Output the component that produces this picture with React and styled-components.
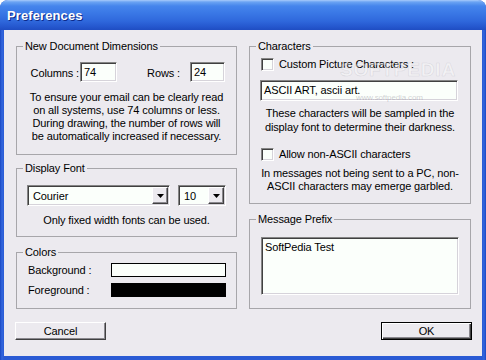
import React from "react";
import styled, { createGlobalStyle } from "styled-components";

const GlobalStyle = createGlobalStyle`
  html, body { margin: 0; padding: 0; background: #ffffff; }
  body {
    font-family: "Liberation Sans", Arial, sans-serif;
    font-size: 11px;
    letter-spacing: -0.12px;
    color: #000;
  }
  #root { width: 486px; height: 360px; }
`;

const Window = styled.div`
  position: relative;
  width: 486px;
  height: 360px;
  box-sizing: border-box;
  display: flex;
  flex-direction: column;
  background: linear-gradient(to right, #1a47c2 0, #3366dd 2px, #2a5ad4 4px, #2a5ad4 482px, #3366dd 484px, #1a47c2 486px);
  border-radius: 8px 8px 0 0;
  overflow: hidden;
`;

const TitleBar = styled.div`
  flex: none;
  height: 30px;
  box-sizing: border-box;
  display: flex;
  align-items: center;
  padding: 1px 0 0 7px;
  background: linear-gradient(
    to bottom,
    #a8cbfb 0px,
    #6aa3f3 2px,
    #4585ec 6px,
    #3a78e6 13px,
    #2f68dc 21px,
    #2659d0 26px,
    #1f4dc2 30px
  );
  color: #fff;
  font-weight: bold;
  font-size: 13px;
  letter-spacing: 0.1px;
  text-shadow: 1px 1px 0 #0c2a8a;
`;

const ClientArea = styled.div`
  flex: 1;
  margin: 0 4px 4px;
  background: #eceaef;
  display: flex;
  flex-direction: column;
  padding-top: 9px;
`;

const Columns = styled.div`
  display: grid;
  grid-template-columns: 221px 222px;
  column-gap: 12px;
  padding: 0 11px 0 12px;
  align-items: start;
`;

const Column = styled.div`
  display: flex;
  flex-direction: column;
`;

const Group = styled.fieldset`
  margin: ${(p) => p.$mt || 0}px 0 0;
  padding: 0;
  height: ${(p) => p.$h}px;
  box-sizing: border-box;
  min-width: 0;
  border: 1px solid #a7a6aa;
  border-radius: 0;
`;

const Legend = styled.legend`
  margin-left: 6px;
  padding: 0 2px;
  line-height: 14px;
  font-size: 11px;
`;

const GroupBody = styled.div`
  display: flex;
  flex-direction: column;
  align-items: ${(p) => p.$align || "stretch"};
  padding: ${(p) => p.$pt}px 0 0 ${(p) => p.$pl || 0}px;
`;

const DimRow = styled.div`
  display: grid;
  grid-template-columns: 63px 37px 73px 35px;
  align-items: center;
  height: 20px;
`;

const FieldLabel = styled.span`
  justify-self: end;
  padding-right: ${(p) => p.$pr || 0}px;
  padding-top: 2px;
`;

const sunken = `
  border: 1px solid;
  border-color: #858585 #ffffff #ffffff #858585;
  box-shadow: inset 1px 1px 0 #404040, inset -1px -1px 0 #d6d3da;
`;

const raised = `
  border: 1px solid;
  border-color: #ffffff #404040 #404040 #ffffff;
  box-shadow: inset -1px -1px 0 #8a888e;
  background: #eceaef;
`;

const TextBox = styled.div`
  box-sizing: border-box;
  width: ${(p) => p.$w}px;
  height: ${(p) => p.$h || 20}px;
  margin: ${(p) => p.$m || "0"};
  background: #fbfffb;
  ${sunken}
  padding: 2px 0 0 3px;
  line-height: 15px;
  white-space: nowrap;
  overflow: hidden;
`;

const Note = styled.p`
  margin: ${(p) => p.$mt || 0}px 0 0;
  text-align: center;
  line-height: ${(p) => p.$lh || 13}px;
`;

const SelectRow = styled.div`
  display: flex;
  gap: 8px;
  height: 21px;
`;

const Select = styled.div`
  box-sizing: border-box;
  width: ${(p) => p.$w}px;
  height: 21px;
  display: flex;
  align-items: stretch;
  background: #fbfffb;
  ${sunken}
  padding: 1px;
`;

const SelectValue = styled.span`
  flex: 1;
  padding: 2px 0 0 4px;
  line-height: 14px;
`;

const DropButton = styled.span`
  flex: none;
  width: 16px;
  box-sizing: border-box;
  ${raised}
  display: flex;
  align-items: center;
  justify-content: center;
`;

const ColorRow = styled.div`
  display: grid;
  grid-template-columns: 83px 115px;
  align-items: center;
  height: 14px;
  margin-top: ${(p) => p.$mt || 0}px;
`;

const Swatch = styled.div`
  height: 14px;
  box-sizing: border-box;
  border: 1px solid #000;
  background: ${(p) => p.$color};
`;

const CheckRow = styled.label`
  display: flex;
  align-items: center;
  height: 13px;
  margin-top: ${(p) => p.$mt || 0}px;
`;

const CheckBox = styled.span`
  flex: none;
  width: 13px;
  height: 13px;
  box-sizing: border-box;
  background: #fbfffb;
  ${sunken}
`;

const CheckText = styled.span`
  margin-left: 5px;
  line-height: 13px;
`;

const TextArea = styled.div`
  box-sizing: border-box;
  width: 198px;
  height: 58px;
  background: #fbfffb;
  ${sunken}
  padding: 2px 0 0 3px;
  line-height: 14px;
`;

const ButtonRow = styled.div`
  display: flex;
  justify-content: space-between;
  margin-top: 13px;
  padding: 0 10px 0 11px;
`;

const Button = styled.div`
  box-sizing: border-box;
  width: 91px;
  height: 18px;
  display: flex;
  align-items: center;
  justify-content: center;
  ${raised}
  ${(p) =>
    p.$default &&
    `
    border: 1px solid #000;
    box-shadow: inset 1px 1px 0 #ffffff, inset -1px -1px 0 #404040, inset -2px -2px 0 #8a888e;
  `}
  line-height: 14px;
`;

const Watermark = styled.div`
  position: absolute;
  left: 340px;
  top: 60px;
  font-size: 19px;
  line-height: 20px;
  font-weight: bold;
  letter-spacing: 0.8px;
  color: rgba(255, 255, 255, 0.35);
  -webkit-text-stroke: 0.6px rgba(150, 150, 160, 0.25);
  pointer-events: none;
`;

const WatermarkUrl = styled.div`
  position: absolute;
  left: 356px;
  top: 93px;
  font-size: 8px;
  line-height: 9px;
  color: rgba(140, 140, 150, 0.4);
  pointer-events: none;
`;

const Arrow = () => (
  <svg width="7" height="4" viewBox="0 0 7 4">
    <polygon points="0,0 7,0 3.5,4" fill="#000" />
  </svg>
);

export default function App() {
  return (
    <>
      <GlobalStyle />
      <Window>
        <TitleBar>Preferences</TitleBar>
        <ClientArea>
          <Columns>
            <Column>
              <Group $h={116}>
                <Legend>New Document Dimensions</Legend>
                <GroupBody $pt={9}>
                  <DimRow>
                    <FieldLabel $pr={1}>Columns :</FieldLabel>
                    <TextBox $w={37}>74</TextBox>
                    <FieldLabel $pr={10}>Rows :</FieldLabel>
                    <TextBox $w={35}>24</TextBox>
                  </DimRow>
                  <Note $mt={9}>
                    To ensure your email can be clearly read
                    <br />
                    on all systems, use 74 columns or less.
                    <br />
                    During drawing, the number of rows will
                    <br />
                    be automatically increased if necessary.
                  </Note>
                </GroupBody>
              </Group>
              <Group $h={76} $mt={6}>
                <Legend>Display Font</Legend>
                <GroupBody $pt={10} $pl={10}>
                  <SelectRow>
                    <Select $w={143}>
                      <SelectValue>Courier</SelectValue>
                      <DropButton>
                        <Arrow />
                      </DropButton>
                    </Select>
                    <Select $w={48}>
                      <SelectValue>10</SelectValue>
                      <DropButton>
                        <Arrow />
                      </DropButton>
                    </Select>
                  </SelectRow>
                </GroupBody>
                <Note $mt={8}>Only fixed width fonts can be used.</Note>
              </Group>
              <Group $h={64} $mt={8}>
                <Legend>Colors</Legend>
                <GroupBody $pt={4} $pl={11}>
                  <ColorRow>
                    <span>Background :</span>
                    <Swatch $color="#fbfffb" />
                  </ColorRow>
                  <ColorRow $mt={6}>
                    <span>Foreground :</span>
                    <Swatch $color="#000000" />
                  </ColorRow>
                </GroupBody>
              </Group>
            </Column>
            <Column>
              <Group $h={165}>
                <Legend>Characters</Legend>
                <GroupBody $pt={5} $pl={11} $align="flex-start">
                  <CheckRow>
                    <CheckBox />
                    <CheckText>Custom Picture Characters :</CheckText>
                  </CheckRow>
                  <TextBox $w={198} $h={21} $m="9px 0 0 -1px">
                    ASCII ART, ascii art.
                  </TextBox>
                </GroupBody>
                <Note $mt={5} $lh={14}>
                  These characters will be sampled in the
                  <br />
                  display font to determine their darkness.
                </Note>
                <GroupBody $pt={14} $pl={11}>
                  <CheckRow>
                    <CheckBox />
                    <CheckText>Allow non-ASCII characters</CheckText>
                  </CheckRow>
                </GroupBody>
                <Note $mt={6} $lh={13}>
                  In messages not being sent to a PC, non-
                  <br />
                  ASCII characters may emerge garbled.
                </Note>
              </Group>
              <Group $h={97} $mt={8}>
                <Legend>Message Prefix</Legend>
                <GroupBody $pt={11} $pl={11}>
                  <TextArea>SoftPedia Test</TextArea>
                </GroupBody>
              </Group>
            </Column>
          </Columns>
          <ButtonRow>
            <Button>Cancel</Button>
            <Button $default>OK</Button>
          </ButtonRow>
        </ClientArea>
        <Watermark>SOFTPEDIA</Watermark>
        <WatermarkUrl>www.softpedia.com</WatermarkUrl>
      </Window>
    </>
  );
}
